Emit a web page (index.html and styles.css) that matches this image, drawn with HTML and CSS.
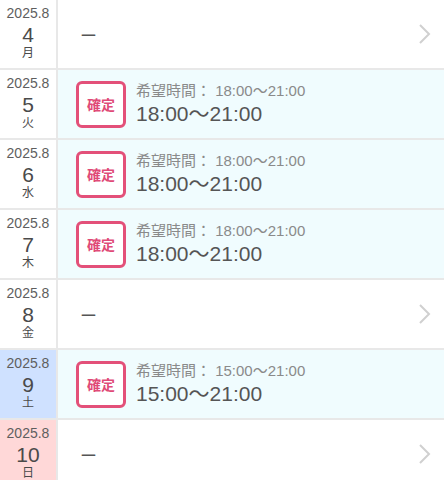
FILE: index.html
```html
<!DOCTYPE html>
<html lang="ja">
<head>
<meta charset="utf-8">
<link rel="stylesheet" href="styles.css">
</head>
<body>
<ul class="list">
  <li class="row">
    <div class="date"><span class="ym">2025.8</span><span class="day">4</span><span class="wd">月</span></div>
    <div class="body empty"><span class="dash">ー</span>
      <svg class="chev" width="14" height="22" viewBox="0 0 14 22"><polyline points="2,2 11,11 2,20" fill="none" stroke="#d0d0d0" stroke-width="2"/></svg>
    </div>
  </li>
  <li class="row">
    <div class="date"><span class="ym">2025.8</span><span class="day">5</span><span class="wd">火</span></div>
    <div class="body fixed"><span class="badge">確定</span>
      <div class="times"><span class="req">希望時間： 18:00〜21:00</span><span class="time">18:00〜21:00</span></div>
    </div>
  </li>
  <li class="row">
    <div class="date"><span class="ym">2025.8</span><span class="day">6</span><span class="wd">水</span></div>
    <div class="body fixed"><span class="badge">確定</span>
      <div class="times"><span class="req">希望時間： 18:00〜21:00</span><span class="time">18:00〜21:00</span></div>
    </div>
  </li>
  <li class="row">
    <div class="date"><span class="ym">2025.8</span><span class="day">7</span><span class="wd">木</span></div>
    <div class="body fixed"><span class="badge">確定</span>
      <div class="times"><span class="req">希望時間： 18:00〜21:00</span><span class="time">18:00〜21:00</span></div>
    </div>
  </li>
  <li class="row">
    <div class="date"><span class="ym">2025.8</span><span class="day">8</span><span class="wd">金</span></div>
    <div class="body empty"><span class="dash">ー</span>
      <svg class="chev" width="14" height="22" viewBox="0 0 14 22"><polyline points="2,2 11,11 2,20" fill="none" stroke="#d0d0d0" stroke-width="2"/></svg>
    </div>
  </li>
  <li class="row">
    <div class="date sat"><span class="ym">2025.8</span><span class="day">9</span><span class="wd">土</span></div>
    <div class="body fixed"><span class="badge">確定</span>
      <div class="times"><span class="req">希望時間： 15:00〜21:00</span><span class="time">15:00〜21:00</span></div>
    </div>
  </li>
  <li class="row">
    <div class="date sun"><span class="ym">2025.8</span><span class="day">10</span><span class="wd">日</span></div>
    <div class="body empty"><span class="dash">ー</span>
      <svg class="chev" width="14" height="22" viewBox="0 0 14 22"><polyline points="2,2 11,11 2,20" fill="none" stroke="#d0d0d0" stroke-width="2"/></svg>
    </div>
  </li>
</ul>
</body>
</html>
```
FILE: styles.css
```css
html, body {
  margin: 0;
  padding: 0;
  background: #ffffff;
  overflow: hidden;
}
body {
  font-family: "Liberation Sans", "Noto Sans CJK JP", sans-serif;
  color: #555555;
}
.list {
  list-style: none;
  margin: 0;
  padding: 0;
  width: 444px;
}
.row {
  display: flex;
  height: 68px;
  border-bottom: 2px solid #e8e8e8;
}
.date {
  box-sizing: border-box;
  width: 58px;
  flex: none;
  border-right: 2px solid #e8e8e8;
  display: flex;
  flex-direction: column;
  align-items: center;
  justify-content: flex-start;
  padding-top: 5px;
  background: #ffffff;
}
.date.sat { background: #cfe1ff; }
.date.sun { background: #ffd8d8; }
.ym {
  font-size: 14px;
  line-height: 16px;
  color: #5e5e5e;
  margin-bottom: 2px;
}
.day {
  font-size: 21px;
  line-height: 24px;
  color: #4a4a4a;
}
.wd {
  font-family: "Liberation Sans", "Noto Sans CJK JP", sans-serif;
  font-size: 12px;
  line-height: 13px;
  color: #4a4a4a;
}
.body {
  flex: 1;
  display: flex;
  align-items: center;
}
.body.empty {
  background: #ffffff;
  padding-left: 22px;
  padding-right: 12px;
  justify-content: space-between;
}
.body.fixed {
  background: #f0fcfe;
  padding-left: 18px;
  gap: 10px;
}
.dash {
  font-family: "Noto Sans CJK JP", sans-serif;
  font-size: 17px;
  color: #555;
}
.chev { display: block; }
.badge {
  box-sizing: border-box;
  width: 50px;
  height: 47px;
  border: 3px solid #e35079;
  border-radius: 6px;
  background: #ffffff;
  color: #e04a77;
  font-family: "Noto Sans CJK JP", sans-serif;
  font-weight: 700;
  font-size: 14px;
  display: flex;
  align-items: center;
  justify-content: center;
}
.times {
  display: flex;
  flex-direction: column;
}
.req {
  font-size: 15px;
  line-height: 20px;
  color: #8a8a8a;
}
.time {
  font-size: 21px;
  line-height: 26px;
  color: #555555;
}
```
